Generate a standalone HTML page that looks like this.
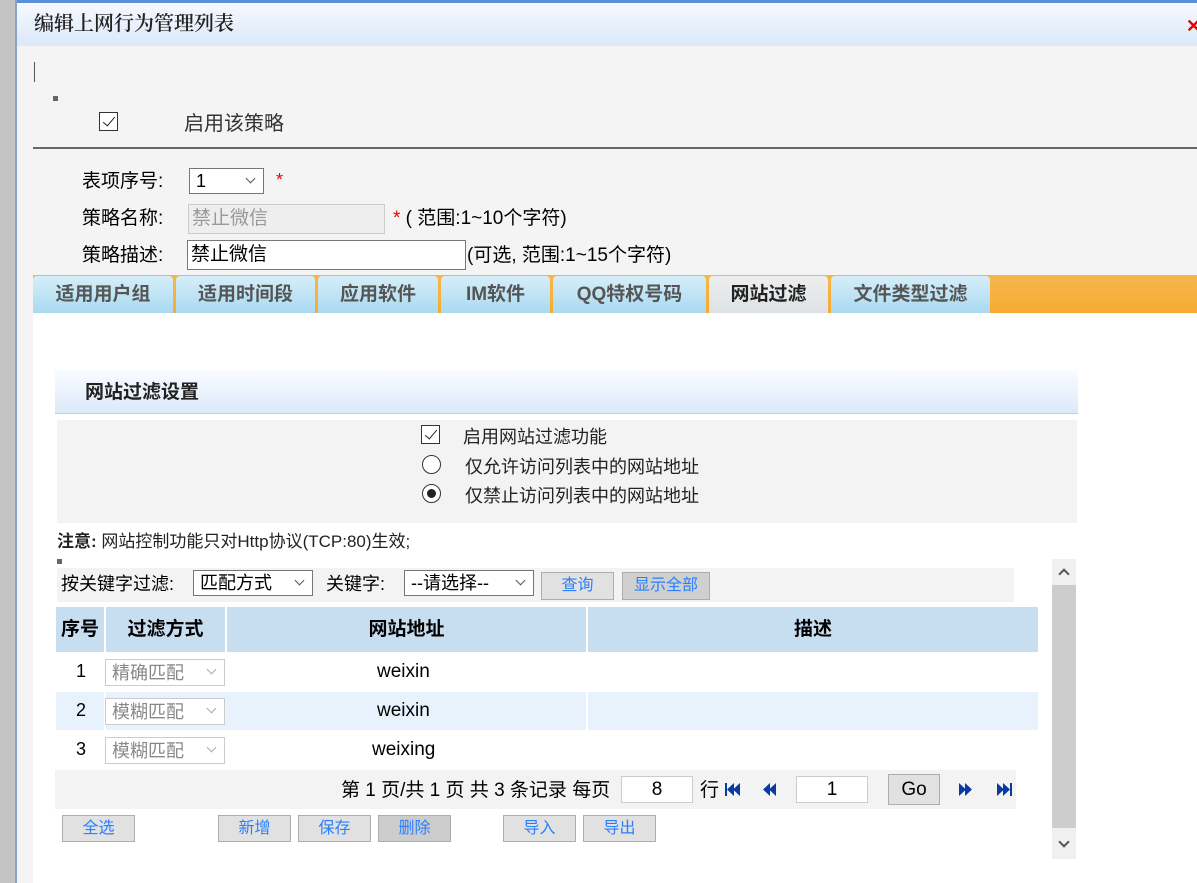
<!DOCTYPE html>
<html><head><meta charset="utf-8"><style>
*{margin:0;padding:0;box-sizing:border-box}
body{width:1197px;height:883px;overflow:hidden;background:#f4f4f4;font-family:"Liberation Sans","Noto Sans CJK SC",sans-serif;font-size:18px;line-height:1.15;color:#000;position:relative}
.a{position:absolute}
.sel{position:absolute;background:#fff;border:1px solid #767676;font-size:18px;padding-left:6px;line-height:24px}
.sel:after{content:"";position:absolute;right:9px;top:6px;width:6px;height:6px;border-right:1px solid #555;border-bottom:1px solid #555;transform:rotate(45deg)}
.dsel{position:absolute;background:#fff;border:1px solid #ccc;color:#888;font-size:18px;padding-left:6px;line-height:26px;width:120px;height:27px}
.dsel:after{content:"";position:absolute;right:9px;top:6px;width:6px;height:6px;border-right:1px solid #aaa;border-bottom:1px solid #aaa;transform:rotate(45deg)}
.tab{position:absolute;top:276px;height:37px;background:linear-gradient(#d6eef9,#a9daf0);color:#555;font-weight:bold;font-size:19px;text-align:center;line-height:37px;border-radius:4px 4px 0 0}
.btn{position:absolute;height:27px;background:#e1e1e1;border:1px solid #adadad;color:#2a7fff;font-size:16px;text-align:center;line-height:25px}
.th{position:absolute;top:607px;height:45px;background:#c7ddf0;font-weight:bold;font-size:19px;text-align:center;line-height:45px}
.cb{position:absolute;width:19px;height:19px;border:1px solid #333;background:#fff}
.cb:after{content:"";position:absolute;left:6px;top:1px;width:5px;height:11px;border-right:1.5px solid #222;border-bottom:1.5px solid #222;transform:rotate(40deg)}
.rd{position:absolute;width:19px;height:19px;border:1px solid #333;border-radius:50%;background:#fff}
svg.n{position:absolute;top:783px}
</style></head><body>
<div class="a" style="left:0;top:0;width:15px;height:883px;background:#c4c4c4"></div>
<div class="a" style="left:15px;top:0;width:2px;height:883px;background:#8aa4c8"></div>
<div class="a" style="left:17px;top:0;width:1180px;height:3px;background:#5b8fd6"></div>
<div class="a" style="left:17px;top:3px;width:1180px;height:43px;background:linear-gradient(#f6f9ff,#dbe8f8)"></div>
<div class="a" style="left:34px;top:13px;font-size:20px;font-family:'Liberation Serif','Noto Serif CJK SC',serif;font-weight:600;color:#222">编辑上网行为管理列表</div>
<div class="a" style="left:1186px;top:16px;color:#e00;font-weight:bold;font-size:18px">✕</div>
<div class="a" style="left:34px;top:62px;width:1px;height:20px;background:#555"></div>
<div class="a" style="left:53px;top:96px;width:5px;height:5px;background:#666"></div>
<div class="cb" style="left:99px;top:112px"></div>
<div class="a" style="left:184px;top:113px;color:#333;font-size:20px">启用该策略</div>
<div class="a" style="left:33px;top:147px;width:1164px;height:2px;background:#666"></div>

<div class="a" style="left:82px;top:171px;font-size:19px">表项序号:</div>
<div class="sel" style="left:189px;top:168px;width:75px;height:26px">1</div>
<div class="a" style="left:276px;top:170px;color:#e00">*</div>
<div class="a" style="left:82px;top:208px;font-size:19px">策略名称:</div>
<div class="a" style="left:188px;top:204px;width:197px;height:30px;background:#eee;border:1px solid #ccc;color:#999;padding:3px 3px;font-size:19px">禁止微信</div>
<div class="a" style="left:393px;top:208px;font-size:19px"><span style="color:#e00">*</span> ( 范围:1~10个字符)</div>
<div class="a" style="left:82px;top:245px;font-size:19px">策略描述:</div>
<div class="a" style="left:187px;top:240px;width:279px;height:30px;background:#fff;border:1px solid #777;padding:3px 3px;font-size:19px">禁止微信</div>
<div class="a" style="left:467px;top:245px;font-size:19px">(可选, 范围:1~15个字符)</div>

<div class="a" style="left:33px;top:275px;width:1164px;height:38px;background:linear-gradient(#f6b64e,#f6ab32)"></div>
<div class="tab" style="left:33px;width:140px">适用用户组</div>
<div class="tab" style="left:176px;width:139px">适用时间段</div>
<div class="tab" style="left:318px;width:120px">应用软件</div>
<div class="tab" style="left:441px;width:109px">IM软件</div>
<div class="tab" style="left:553px;width:153px">QQ特权号码</div>
<div class="tab" style="left:709px;width:119px;background:linear-gradient(#eceeef,#dfe2e4);color:#222">网站过滤</div>
<div class="tab" style="left:831px;width:159px">文件类型过滤</div>

<div class="a" style="left:33px;top:313px;width:1164px;height:570px;background:#fff"></div>
<div class="a" style="left:55px;top:370px;width:1023px;height:44px;background:linear-gradient(#fafcff,#dce9f9);border-bottom:1px solid #b8d0ee"></div>
<div class="a" style="left:85px;top:382px;font-weight:bold;font-size:19px;color:#222">网站过滤设置</div>
<div class="a" style="left:57px;top:420px;width:1020px;height:103px;background:#f3f3f3"></div>
<div class="cb" style="left:421px;top:425px"></div>
<div class="a" style="left:463px;top:427px;color:#222">启用网站过滤功能</div>
<div class="rd" style="left:422px;top:455px"></div>
<div class="a" style="left:465px;top:457px;color:#222">仅允许访问列表中的网站地址</div>
<div class="rd" style="left:422px;top:484px"><div class="a" style="left:4px;top:4px;width:9px;height:9px;border-radius:50%;background:#222"></div></div>
<div class="a" style="left:465px;top:486px;color:#222">仅禁止访问列表中的网站地址</div>
<div class="a" style="left:57px;top:532px;font-size:17px;color:#222"><b>注意:</b> 网站控制功能只对Http协议(TCP:80)生效;</div>
<div class="a" style="left:57px;top:559px;width:5px;height:5px;background:#666"></div>

<div class="a" style="left:57px;top:568px;width:957px;height:34px;background:#f3f3f3"></div>
<div class="a" style="left:61px;top:574px">按关键字过滤:</div>
<div class="sel" style="left:193px;top:570px;width:120px;height:26px">匹配方式</div>
<div class="a" style="left:326px;top:574px">关键字:</div>
<div class="sel" style="left:404px;top:570px;width:130px;height:26px">--请选择--</div>
<div class="btn" style="left:541px;top:572px;width:73px;height:28px">查询</div>
<div class="btn" style="left:622px;top:572px;width:88px;height:28px;background:#d0d0d0">显示全部</div>

<div class="th" style="left:56px;width:48px">序号</div>
<div class="th" style="left:106px;width:119px">过滤方式</div>
<div class="th" style="left:227px;width:359px">网站地址</div>
<div class="th" style="left:588px;width:450px">描述</div>
<div class="a" style="left:56px;top:692px;width:982px;height:38px;background:#e8f2fc"></div>
<div class="a" style="left:104px;top:692px;width:2px;height:38px;background:#fff"></div>
<div class="a" style="left:586px;top:692px;width:2px;height:38px;background:#fff"></div>
<div class="a" style="left:76px;top:661px">1</div>
<div class="a" style="left:76px;top:700px">2</div>
<div class="a" style="left:76px;top:739px">3</div>
<div class="dsel" style="left:105px;top:659px">精确匹配</div>
<div class="dsel" style="left:105px;top:698px">模糊匹配</div>
<div class="dsel" style="left:105px;top:737px">模糊匹配</div>
<div class="a" style="left:377px;top:661px;font-size:19px">weixin</div>
<div class="a" style="left:377px;top:700px;font-size:19px">weixin</div>
<div class="a" style="left:372px;top:739px;font-size:19px">weixing</div>

<div class="a" style="left:55px;top:770px;width:961px;height:39px;background:#f3f3f3"></div>
<div class="a" style="left:341px;top:780px;font-size:19px">第 1 页/共 1 页 共 3 条记录 每页</div>
<div class="a" style="left:621px;top:776px;width:72px;height:27px;background:#fff;border:1px solid #ccc;text-align:center;line-height:25px;font-size:19px">8</div>
<div class="a" style="left:700px;top:780px;font-size:19px">行</div>
<svg class="n" style="left:725px" width="16" height="13" viewBox="0 0 16 13"><rect x="0" y="0" width="2" height="13" fill="#0a3a9e"/><path d="M2 6.5L9 0V13Z M8 6.5L15 0V13Z" fill="#0a3a9e"/></svg>
<svg class="n" style="left:763px" width="14" height="13" viewBox="0 0 14 13"><path d="M0 6.5L7 0V13Z M6 6.5L13 0V13Z" fill="#0a3a9e"/></svg>
<div class="a" style="left:796px;top:776px;width:72px;height:27px;background:#fff;border:1px solid #ccc;text-align:center;line-height:25px;font-size:19px">1</div>
<div class="btn" style="left:888px;top:774px;width:52px;height:31px;color:#000;font-size:19px;line-height:29px">Go</div>
<svg class="n" style="left:959px" width="14" height="13" viewBox="0 0 14 13"><path d="M0 0L7 6.5L0 13Z M6 0L13 6.5L6 13Z" fill="#0a3a9e"/></svg>
<svg class="n" style="left:997px" width="16" height="13" viewBox="0 0 16 13"><path d="M0 0L7 6.5L0 13Z M6 0L13 6.5L6 13Z" fill="#0a3a9e"/><rect x="13" y="0" width="2" height="13" fill="#0a3a9e"/></svg>

<div class="btn" style="left:62px;top:815px;width:73px">全选</div>
<div class="btn" style="left:218px;top:815px;width:73px">新增</div>
<div class="btn" style="left:298px;top:815px;width:73px">保存</div>
<div class="btn" style="left:378px;top:815px;width:73px;background:#ccc">删除</div>
<div class="btn" style="left:503px;top:815px;width:73px">导入</div>
<div class="btn" style="left:583px;top:815px;width:73px">导出</div>

<div class="a" style="left:1052px;top:559px;width:24px;height:300px;background:#f0f0f0"></div>
<div class="a" style="left:1052px;top:585px;width:24px;height:243px;background:#cdcdcd"></div>
<div class="a" style="left:1060px;top:570px;width:8px;height:8px;border-left:2px solid #555;border-top:2px solid #555;transform:rotate(45deg)"></div>
<div class="a" style="left:1060px;top:838px;width:8px;height:8px;border-right:2px solid #555;border-bottom:2px solid #555;transform:rotate(45deg)"></div>
</body></html>
